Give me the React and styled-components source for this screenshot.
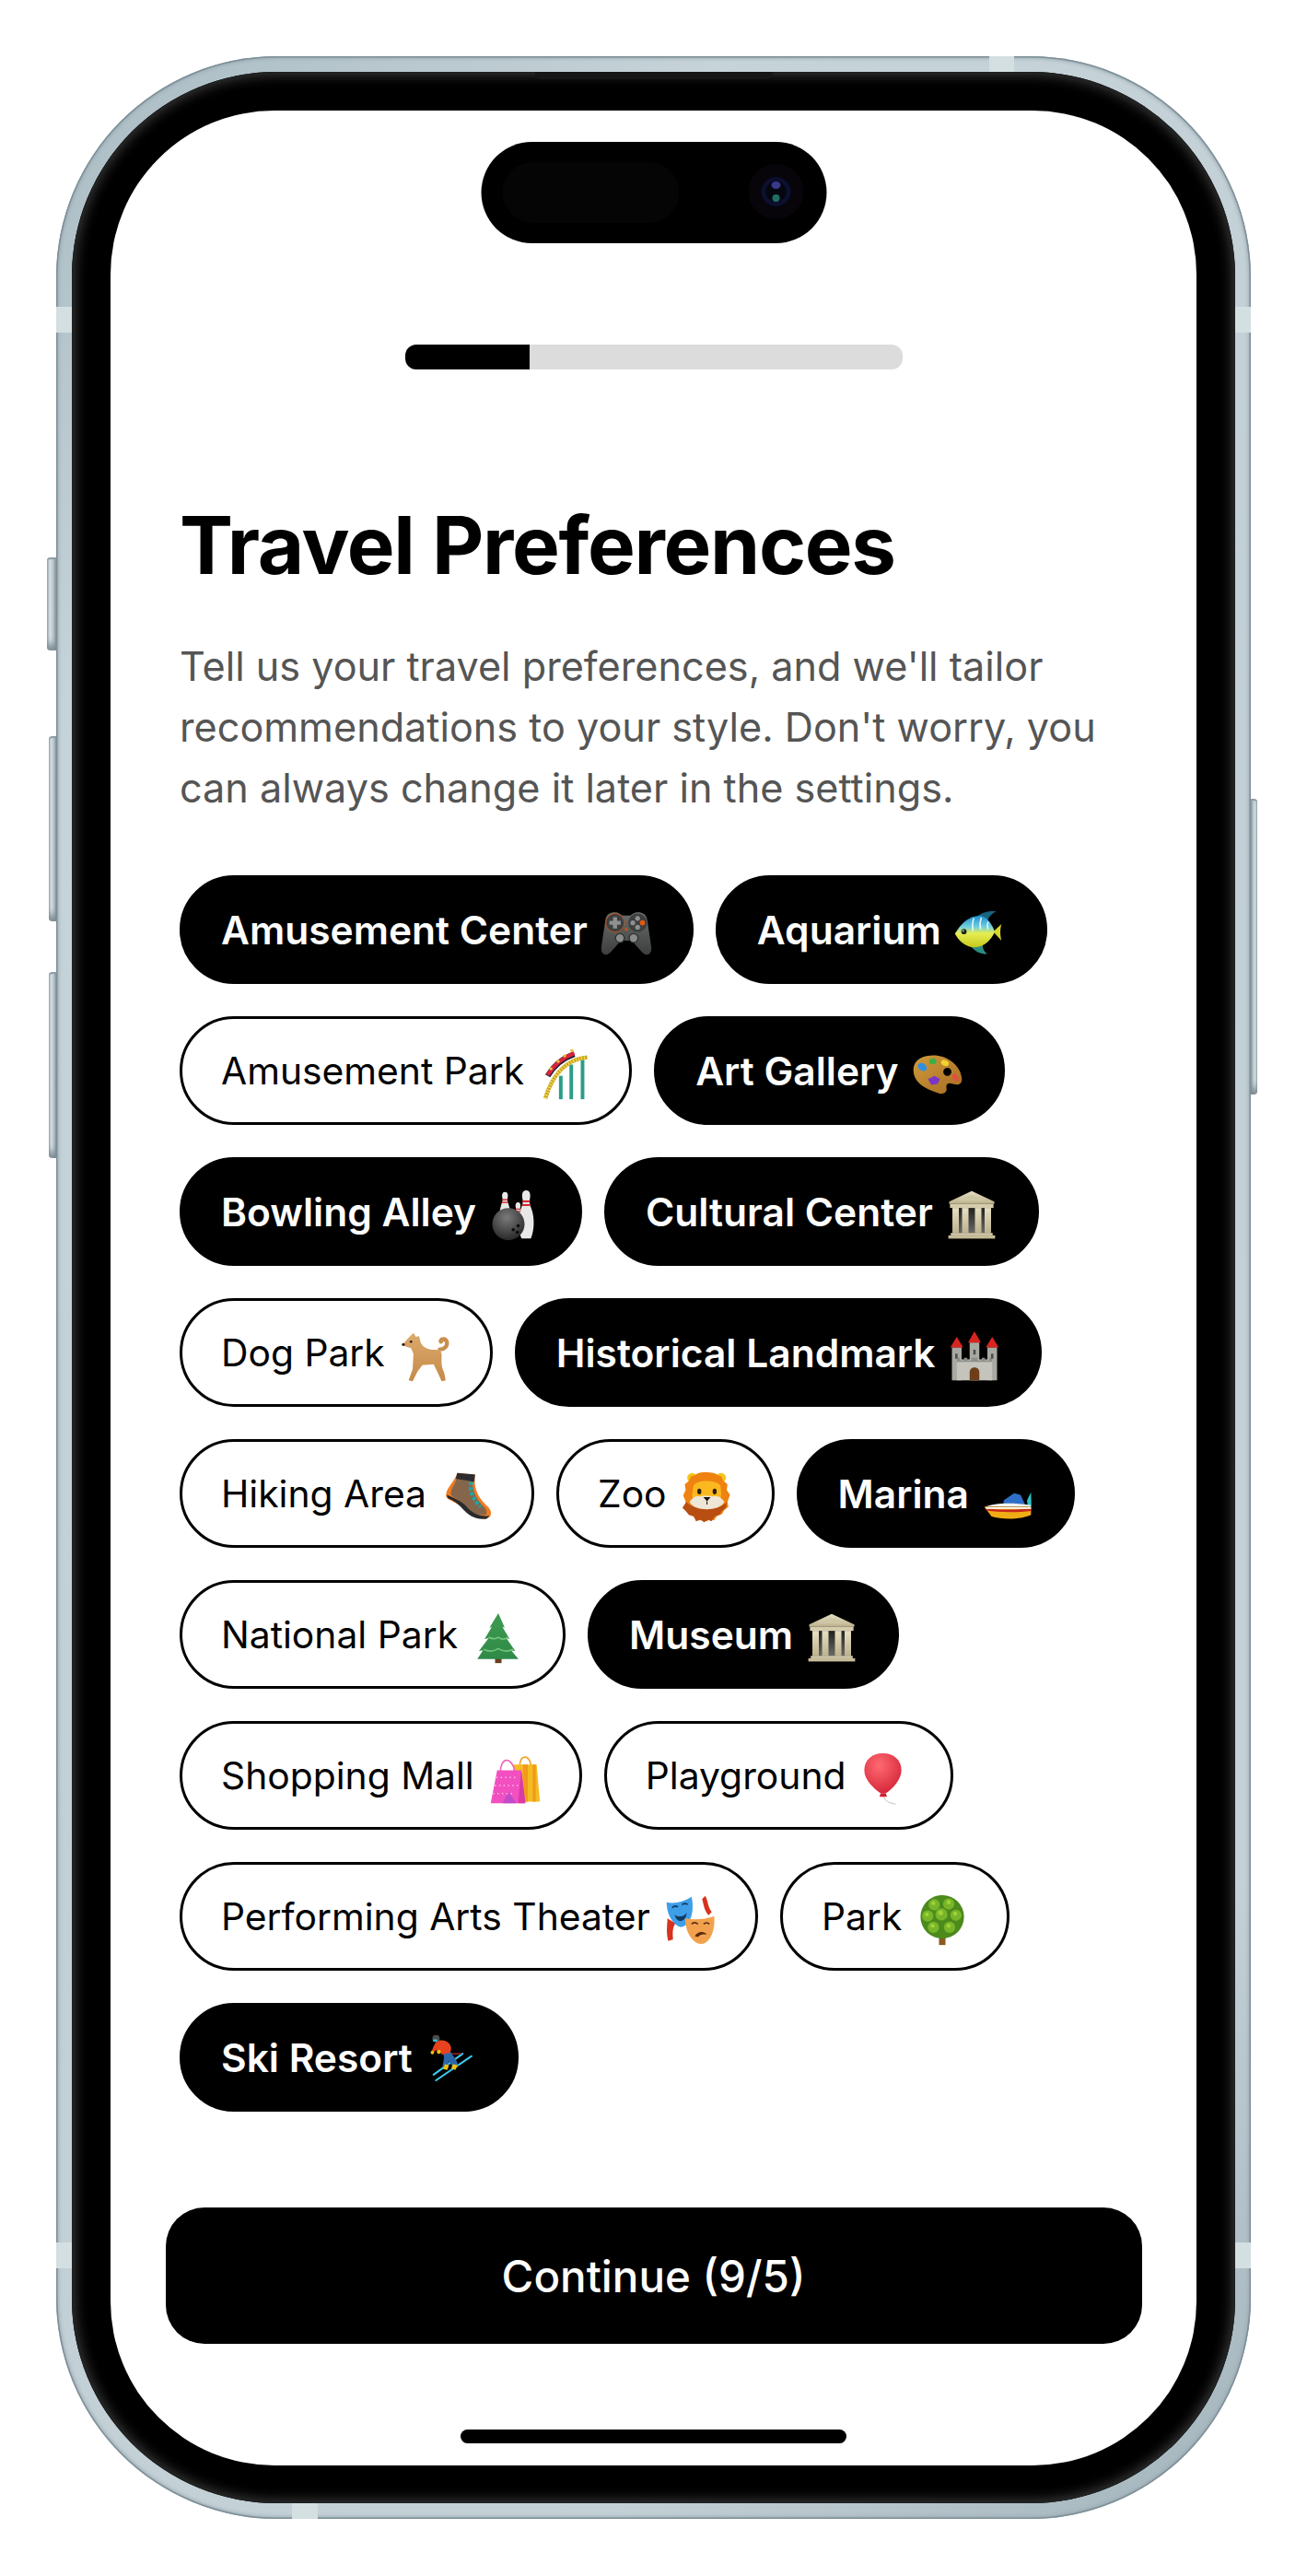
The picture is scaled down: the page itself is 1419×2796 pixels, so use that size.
import styled, { createGlobalStyle } from "styled-components";

const GlobalStyle = createGlobalStyle`
  html, body {
    margin: 0;
    padding: 0;
    background: #fff;
  }
  body {
    font-family: "Inter", "Liberation Sans", sans-serif;
  }
  * {
    box-sizing: border-box;
  }
`;

const Page = styled.div`
  width: 1419px;
  height: 2796px;
  padding: 61px 0 0 61px;
  overflow: hidden;
`;

const Phone = styled.div`
  position: relative;
  width: 1297px;
  height: 2673px;
  padding: 17px;
  border-radius: 240px;
  background: linear-gradient(135deg, #a9bbc3 0%, #c6d3d8 18%, #c2cfd5 50%, #c4d1d6 82%, #a2b3bb 100%);
  box-shadow: inset 0 0 0 1.5px #7f9098, inset 0 0 4px 2px #93a4ac;
`;

const Band = styled.span`
  position: absolute;
  top: ${(p) => p.$top ?? "auto"};
  bottom: ${(p) => p.$bottom ?? "auto"};
  left: ${(p) => p.$left ?? "auto"};
  right: ${(p) => p.$right ?? "auto"};
  width: ${(p) => p.$width};
  height: ${(p) => p.$height};
  background: #d4dfe2;
`;

const SideKey = styled.span`
  position: absolute;
  top: ${(p) => p.$top}px;
  height: ${(p) => p.$height}px;
  width: ${(p) => p.$width}px;
  ${(p) => (p.$side === "left" ? `left: -${p.$width}px;` : `right: -${p.$width}px;`)}
  border-radius: ${(p) => (p.$side === "left" ? "4px 0 0 4px" : "0 4px 4px 0")};
  background: linear-gradient(
    ${(p) => (p.$side === "left" ? "90deg" : "270deg")},
    #98a7ae 0%,
    #dbe4e8 30%,
    #b7c5cb 70%,
    #84949c 100%
  );
  box-shadow: inset 0 2px 1px #8d9ca4, inset 0 -10px 8px -4px #7c8a91;
`;

const Bezel = styled.div`
  position: relative;
  width: 100%;
  height: 100%;
  padding: 42px 42px 41px;
  border-radius: 222px;
  background: #000;
  box-shadow: inset 0 0 0 1px #1c1f20, inset 0 0 14px 3px #3d3d3d;
`;

const Speaker = styled.span`
  position: absolute;
  top: 0;
  left: 50%;
  transform: translateX(-50%);
  width: 258px;
  height: 8px;
  border-radius: 0 0 6px 6px;
  background: #161616;
`;

const Screen = styled.main`
  position: relative;
  display: flex;
  flex-direction: column;
  width: 1179px;
  height: 2556px;
  padding-top: 254px;
  border-radius: 178px;
  background: #fff;
  overflow: hidden;
`;

const Island = styled.div`
  position: absolute;
  top: 34px;
  left: 50%;
  transform: translateX(-50%);
  width: 375px;
  height: 110px;
  border-radius: 55px;
  background: #000;
`;

const Sensor = styled.span`
  position: absolute;
  left: 23px;
  top: 22px;
  width: 192px;
  height: 66px;
  border-radius: 33px;
  background: #050505;
`;

const Lens = styled.svg`
  position: absolute;
  left: 290px;
  top: 24px;
  width: 60px;
  height: 60px;
`;

const Progress = styled.div`
  align-self: center;
  width: 540px;
  height: 27px;
  border-radius: 12px;
  background: #dcdcdc;
  overflow: hidden;
`;

const ProgressFill = styled.div`
  width: ${(p) => p.$value}%;
  height: 100%;
  background: #000;
`;

const Content = styled.section`
  display: flex;
  flex-direction: column;
  padding: 0 75px;
`;

const Title = styled.h1`
  margin: 137px 0 0;
  font-size: 87px;
  line-height: 108px;
  font-weight: 700;
  letter-spacing: -1.3px;
  color: #000;
`;

const Description = styled.p`
  margin: 44px 0 0;
  font-size: 43.2px;
  line-height: 66px;
  font-weight: 400;
  color: #555;
`;

const Chips = styled.div`
  display: flex;
  flex-wrap: wrap;
  gap: 35px 24px;
  margin-top: 62px;
`;

const Chip = styled.button`
  display: inline-flex;
  align-items: center;
  height: 118px;
  padding: 0 42px;
  border: 3px solid #000;
  border-radius: 59px;
  background: ${(p) => (p.$selected ? "#000" : "#fff")};
  color: ${(p) => (p.$selected ? "#fff" : "#000")};
  font-family: inherit;
  font-size: ${(p) => (p.$selected ? "42.5px" : "40.8px")};
  font-weight: ${(p) => (p.$selected ? 600 : 400)};
  white-space: pre;

  svg {
    margin-left: ${(p) => (p.$selected ? "14px" : "16px")};
  }
`;

const EmojiIcon = styled.svg`
  flex: none;
  width: 56px;
  height: 56px;
  transform: translateY(4px);
`;

const Footer = styled.footer`
  display: flex;
  flex-direction: column;
  align-items: center;
  margin-top: auto;
  padding-bottom: 24px;
`;

const ContinueButton = styled.button`
  width: 1060px;
  height: 148px;
  border: 0;
  border-radius: 42px;
  background: #000;
  color: #fff;
  font-family: inherit;
  font-size: 47.5px;
  font-weight: 500;
`;

const HomeIndicator = styled.div`
  width: 419px;
  height: 15px;
  margin-top: 93px;
  border-radius: 8px;
  background: #000;
`;

const Emoji = ({ children }) => <EmojiIcon viewBox="0 0 64 64">{children}</EmojiIcon>;

const Gamepad = () => (
  <Emoji>
    <defs>
      <linearGradient id="padBody" x1="0" y1="0" x2="0" y2="1">
        <stop offset="0" stopColor="#6b6e6c" />
        <stop offset="1" stopColor="#3c3f3d" />
      </linearGradient>
    </defs>
    <path d="M18 6C11 6 7 9 6 16L1 49c-1 8 4 11 8 9 4-2 13-14 16-17h14c3 3 12 15 16 17 4 2 9-1 8-9l-5-33c-1-7-5-10-12-10-5 0-7 3-9 4H27c-2-1-4-4-9-4Z" fill="url(#padBody)" />
    <circle cx="18" cy="19" r="11.5" fill="#3d3f3e" stroke="#c2541f" strokeWidth="1" />
    <path d="M15.5 12h5v4.500h4.500v5h-4.500v4.500h-5v-4.500H11v-5h4.500Z" fill="#8e918f" />
    <circle cx="46" cy="19" r="11.5" fill="#3d3f3e" />
    <circle cx="46" cy="13.500" r="3" fill="#8e918f" />
    <circle cx="52" cy="19" r="3.200" fill="#e2590f" />
    <circle cx="40" cy="19" r="3" fill="#8e918f" />
    <circle cx="46" cy="24.500" r="3" fill="#8e918f" />
    <circle cx="32" cy="27" r="2" fill="#c2541f" />
    <circle cx="24" cy="38" r="5.500" fill="#8a8d8b" stroke="#2e302f" strokeWidth="1.500" />
    <circle cx="41" cy="38" r="5.500" fill="#8a8d8b" stroke="#2e302f" strokeWidth="1.500" />
  </Emoji>
);

const Fish = () => (
  <Emoji>
    <defs>
      <linearGradient id="fishBody" x1="0" y1="0" x2="0" y2="1">
        <stop offset="0" stopColor="#1f8fd0" />
        <stop offset="0.35" stopColor="#6fd0e0" />
        <stop offset="0.55" stopColor="#e6ee52" />
        <stop offset="1" stopColor="#c7c81c" />
      </linearGradient>
    </defs>
    <g transform="translate(0 2) scale(0.93)">
      <path d="M28 12C36 4 46 2 56 3 50 6 46 10 44 16Z" fill="#17657f" />
      <path d="M22 50c6 6 12 10 22 10-4-3-6-7-6-12Z" fill="#2c8d80" />
      <path d="M52 30 63 20c-2 8-2 14 0 22Z" fill="#d7d62a" />
      <path d="M1 33C8 20 20 9 33 9c10 0 17 10 21 21-4 11-15 21-27 21C15 51 6 42 1 33Z" fill="url(#fishBody)" />
      <path d="M26 12c-2 7-2 12-1 17M36 11c-2 6-2 11-1 16M45 17c-1 4-1 7 0 10" stroke="#fff" strokeWidth="2" fill="none" opacity="0.85" />
      <circle cx="13" cy="30" r="3.500" fill="#20261a" />
      <circle cx="12" cy="29" r="1" fill="#fff" />
    </g>
  </Emoji>
);

const Coaster = () => (
  <Emoji>
    <g fill="#2a9d8a">
      <rect x="25" y="34" width="4.500" height="29" />
      <rect x="38" y="20" width="4.500" height="43" />
      <rect x="52" y="14" width="4.500" height="49" />
    </g>
    <path d="M8 62C14 42 28 14 60 11" fill="none" stroke="#c9a21b" strokeWidth="5" />
    <path d="M8 62C14 42 28 14 60 11" fill="none" stroke="#f5dd5c" strokeWidth="4" strokeDasharray="1.500 2" />
    <path d="M11 34C18 22 30 12 44 7" fill="none" stroke="#1c1c34" strokeWidth="7" />
    <path d="M11 33C18 21 30 11 44 6" fill="none" stroke="#d8243a" strokeWidth="5" />
    <g fill="#e8c040">
      <circle cx="15" cy="25" r="2" />
      <circle cx="24" cy="16" r="2" />
      <circle cx="32" cy="9" r="2" />
      <circle cx="41" cy="2.500" r="2" />
    </g>
  </Emoji>
);

const Palette = () => (
  <Emoji>
    <defs>
      <linearGradient id="woodBody" x1="0" y1="0" x2="1" y2="1">
        <stop offset="0" stopColor="#d09a3c" />
        <stop offset="1" stopColor="#a66d22" />
      </linearGradient>
    </defs>
    <path fillRule="evenodd" d="M2 25C3 11 20 7 33 9c14 2 28 14 29 28 .5 8-5 9-11 7-6-2-9 0-8 5 1 6-5 9-11 6C15 50 1 41 2 25Zm42-1a5 5 0 1 0 .1 0Z" fill="url(#woodBody)" />
    <ellipse cx="13" cy="23" rx="6" ry="4.500" fill="#2f8fe0" transform="rotate(35 13 23)" />
    <ellipse cx="26" cy="16" rx="4.500" ry="3.800" fill="#3cb043" />
    <ellipse cx="41" cy="18" rx="5" ry="3.500" fill="#f2d32c" transform="rotate(25 41 18)" />
    <ellipse cx="54" cy="36" rx="3.500" ry="5" fill="#e0503e" transform="rotate(-25 54 36)" />
    <path d="M20 38l8-4 7 4-3 6-8 1Z" fill="#7a35c8" />
  </Emoji>
);

const BowlingPin = ({ x, y, s }) => (
  <g transform={`translate(${x} ${y}) scale(${s})`}>
    <path d="M7 0c4 0 5 4 4 9-1 4 0 6 2 12 3 9 3 22-1 31H2c-4-9-4-22-1-31C3 15 4 13 3 9 2 4 3 0 7 0Z" fill="#e8e8e6" />
    <rect x="3" y="11" width="8" height="2" fill="#d8242c" />
    <rect x="2.500" y="15" width="9" height="2" fill="#d8242c" />
  </g>
);

const Bowling = () => (
  <Emoji>
    <BowlingPin x={14} y={3} s={0.82} />
    <BowlingPin x={38} y={1} s={1.15} />
    <BowlingPin x={31} y={16} s={0.7} />
    <defs>
      <radialGradient id="ballFill" cx="0.45" cy="0.3" r="0.8">
        <stop offset="0" stopColor="#7a7a7a" />
        <stop offset="1" stopColor="#1d1d1d" />
      </radialGradient>
    </defs>
    <circle cx="24" cy="43" r="20" fill="url(#ballFill)" />
    <g fill="#0b0b0b">
      <circle cx="30" cy="50" r="2" />
      <circle cx="36" cy="45" r="2" />
      <circle cx="35" cy="53" r="2" />
    </g>
  </Emoji>
);

const Temple = () => (
  <Emoji>
    <defs>
      <linearGradient id="stone" x1="0" y1="0" x2="0" y2="1">
        <stop offset="0" stopColor="#e6dfc4" />
        <stop offset="1" stopColor="#bdb28e" />
      </linearGradient>
      <linearGradient id="templeInner" x1="0" y1="0" x2="0" y2="1">
        <stop offset="0" stopColor="#1b1a18" />
        <stop offset="1" stopColor="#6b6a66" />
      </linearGradient>
    </defs>
    <rect x="9" y="20" width="46" height="34" fill="url(#templeInner)" />
    <path d="M32 2 60 15v3H4v-3Z" fill="url(#stone)" />
    <path d="M32 7 50 14H14Z" fill="#cfc6a5" />
    <rect x="5" y="18" width="54" height="5" fill="#d5ccad" />
    <g fill="url(#stone)">
      <rect x="8" y="23" width="8" height="31" />
      <rect x="20" y="23" width="8" height="31" />
      <rect x="36" y="23" width="8" height="31" />
      <rect x="48" y="23" width="8" height="31" />
    </g>
    <rect x="6" y="54" width="52" height="3" fill="#d8cfb0" />
    <rect x="3" y="57" width="58" height="4" fill="#c6bc99" />
  </Emoji>
);

const Dog = () => (
  <Emoji>
    <defs>
      <linearGradient id="dogFur" x1="0" y1="0" x2="0" y2="1">
        <stop offset="0" stopColor="#dcaa6d" />
        <stop offset="1" stopColor="#c58a4a" />
      </linearGradient>
    </defs>
    <path d="M50 26c7 0 12-5 11-12-1-6-9-8-12-3-2 3 1 7 4 5 1-1 0-3 2-2 3 2 0 7-5 7-2 0-3 1-3 3Z" fill="#c98f4e" />
    <path d="M17 3l3 5 4-1 2 8c2 5 8 9 17 9 5 0 9 1 9 6 0 8-1 14 3 22l2 10-5 1-6-13-4-8-14 1-6 8-6 12-5-1 5-14 1-19-3-7-7-2-3-3 5-6Z" fill="url(#dogFur)" />
    <circle cx="14" cy="14" r="1.500" fill="#2c1c10" />
    <circle cx="4.500" cy="17.500" r="1.800" fill="#2c1c10" />
  </Emoji>
);

const Castle = () => (
  <Emoji>
    <g fill="#a9a9a3">
      <rect x="4" y="21" width="12" height="41" />
      <rect x="26" y="15" width="12" height="47" />
      <rect x="48" y="21" width="12" height="41" />
      <path d="M10 36h44v26H10Z" fill="#c4c4bc" />
      <path d="M10 34h4v3h5v-3h4v3h5v-3h8v3h5v-3h4v3h5v-3h4v5H10Z" fill="#8f8f89" />
    </g>
    <g fill="#d7261f">
      <path d="M2 21 10 8l8 13Z" />
      <path d="M24 15 32 1l8 14Z" />
      <path d="M46 21 54 8l8 13Z" />
    </g>
    <path d="M26 62V52c0-8 12-8 12 0v10Z" fill="#6e3e1b" />
    <g fill="#4d4d49">
      <rect x="8" y="29" width="3" height="6" />
      <rect x="30.500" y="24" width="3" height="6" />
      <rect x="52.500" y="29" width="3" height="6" />
    </g>
  </Emoji>
);

const Boot = () => (
  <Emoji>
    <path d="M20 2 42 4c-2 14 2 28 16 40 5 4 5 12 0 14-12 2-22-2-30-12C18 37 6 36 6 30c0-10 10-16 14-28Z" fill="#f07c21" />
    <path d="M20 5 39 7c-1 13 2 26 15 38 3 3 3 8 1 9-10 1-20-3-26-12-7-8-17-10-17-14 0-9 6-11 8-23Z" fill="#85664b" />
    <path d="M20 2 42 4l-1 9-23-4Z" fill="#2d2d2f" />
    <path d="M37 13c-2 12 3 22 12 31" fill="none" stroke="#1ca6a8" strokeWidth="5" strokeDasharray="4 2.500" />
    <path d="M8 33c8 3 14 8 20 15 8 9 18 12 28 11l4-4c-12 2-22-3-29-12C24 36 16 33 7 29Z" fill="#2b2b2b" />
  </Emoji>
);

const Lion = () => (
  <Emoji>
    <circle cx="13" cy="8" r="6" fill="#f5c518" />
    <circle cx="49" cy="8" r="6" fill="#f5c518" />
    <path d="M31 1c6 0 11 1 15 4l3 1 3 6 5 4-1 7 4 6-3 9 1 6-5 4-3 5-6 2-4 6-4-2-5 3-5-3-5 2-3-6-6-2-4-5-4-4 1-7-3-7 3-7-1-7 5-4 3-6 4-1c3-3 9-4 15-4Z" fill="#ef8211" />
    <path d="M6 38c5 6 14 8 25 8s20-2 25-8l-1 7-5 4-3 5-6 2-4 6-4-2-5 3-5-3-5 2-3-6-6-2-4-5-4-4Z" fill="#b84e12" />
    <path d="M15 17c4-4 10-5 16-5s13 1 17 5c1 6 2 13 0 17H14c-2-4 0-11 1-17Z" fill="#fbb81f" />
    <path d="M10 38c3-6 9-8 13-7 3-1 12-1 16 0 5-1 11 1 14 7-3 6-12 9-22 9s-18-3-21-9Z" fill="#eee6d6" />
    <ellipse cx="22" cy="25" rx="2.500" ry="3.500" fill="#2a1a10" />
    <ellipse cx="41" cy="25" rx="2.500" ry="3.500" fill="#2a1a10" />
    <path d="M27 32h9l-4.500 5Z" fill="#1b1210" />
    <path d="M31.500 37v4" stroke="#1b1210" strokeWidth="1.200" />
  </Emoji>
);

const Boat = () => (
  <Emoji>
    <path d="M57 44 56 36l5-10 .5 18Z" fill="#2cc3c6" />
    <path d="M27 36 40 27l8 2 6 13H27Z" fill="#2f6fc8" />
    <path d="M3 44c14-4 28-6 58-2l-1 2Z" fill="#f3f3f0" />
    <path d="M3 44h58v10c-12 6-36 6-49 2Z" fill="#f0ac14" />
    <path d="M4 46c16 2 40 2 57 0v3c-16 2-40 2-55-.5Z" fill="#c8281e" />
    <path d="M5 44.500h56v2H5Z" fill="#fff" />
  </Emoji>
);

const Pine = () => (
  <Emoji>
    <defs>
      <linearGradient id="needles" x1="0" y1="0" x2="0" y2="1">
        <stop offset="0" stopColor="#3f9a50" />
        <stop offset="1" stopColor="#2f8a48" />
      </linearGradient>
    </defs>
    <rect x="28" y="54" width="8" height="9" fill="#6b3d1c" />
    <path d="M32 1 40 19l-3-1 9 15-4-1 11 16-5-1 9 11H6l7-11-5 1 12-16-5 1 9-15-3 1Z" fill="url(#needles)" />
    <path d="M20 31c4 2 8 3 12 0 4 3 8 3 12 0M14 46c6 3 12 3 18-1 6 4 12 4 18 1" stroke="#72c47a" strokeWidth="2" fill="none" />
  </Emoji>
);

const Bags = () => (
  <Emoji>
    <path d="M38 17c0-16 12-16 14-2" fill="none" stroke="#f0a22c" strokeWidth="2" />
    <path d="M30 14h29l4 46H30Z" fill="#f3bc21" />
    <path d="M42 14h6v46h-6ZM54 14h4v46h-4Z" fill="#f29a1b" />
    <path d="M14 24C14 4 28 4 32 22" fill="none" stroke="#f06ac0" strokeWidth="2" />
    <path d="M10 21h30l5 41H2Z" fill="#f24fc0" />
    <path d="M24 48 34 62H17Z" fill="#c04bc8" />
    <path d="M40 21 45 62H36Z" fill="#d93ba6" />
    <path d="M9 30h26M7 40h29M5 50h26" stroke="#ffc4ea" strokeWidth="1.500" strokeDasharray="1.500 4" />
  </Emoji>
);

const Balloon = () => (
  <Emoji>
    <defs>
      <radialGradient id="balloonFill" cx="0.4" cy="0.3" r="0.8">
        <stop offset="0" stopColor="#ff6a72" />
        <stop offset="1" stopColor="#d11f33" />
      </radialGradient>
    </defs>
    <path d="M28 0c13 0 23 8 23 21 0 12-12 24-20 29h-5C17 44 5 33 5 21 5 8 15 0 28 0Z" fill="url(#balloonFill)" />
    <path d="M25 50h7l1 4h-9Z" fill="#d11f33" />
    <path d="M29 54c2 6 8 8 15 9" fill="none" stroke="#b9b9b9" strokeWidth="1" />
  </Emoji>
);

const Masks = () => (
  <Emoji>
    <path d="M50 2c4 8 3 14 8 20l-4 4c-6-7-6-14-8-20Z" fill="#d6321f" />
    <path d="M3 30c0 8-2 16 1 28l6-2c-1-10 0-16 3-20Z" fill="#d6321f" />
    <path d="M2 10c10 2 20 0 31-7 3 14 1 28-7 35-5 4-8 3-12 0C6 32 2 21 2 10Z" fill="#3e9fe8" />
    <path d="M9 17c2-3 5-3 7-1M21 13c2-2 6-2 7 0" stroke="#123a63" strokeWidth="2" fill="none" />
    <path d="M12 25c4 4 11 3 15-2-1 7-4 10-8 10-3 0-6-3-7-8Z" fill="#123a63" />
    <path d="M25 30c10 2 22 2 36-3 1 11-1 24-8 31-5 5-11 5-17 0-7-6-11-17-11-28Z" fill="#f2a24e" />
    <path d="M33 37c2-2 5-2 8 0M48 37c2-2 5-2 7 0" stroke="#5a2a0e" strokeWidth="2" fill="none" />
    <path d="M37 52c3-6 11-7 15-2-4-1-9 0-11 3Z" fill="#5a2a0e" />
  </Emoji>
);

const BroadTree = () => (
  <Emoji>
    <rect x="28" y="50" width="8" height="13" fill="#8a5a1e" />
    <ellipse cx="32" cy="28" rx="27" ry="27" fill="#4c8a1c" />
    <g fill="#79b52a">
      <circle cx="22" cy="13" r="7" />
      <circle cx="40" cy="12" r="7" />
      <circle cx="14" cy="27" r="7" />
      <circle cx="31" cy="25" r="7.500" />
      <circle cx="49" cy="26" r="7" />
      <circle cx="21" cy="41" r="7" />
      <circle cx="41" cy="41" r="7" />
    </g>
    <g fill="#a0d236">
      <circle cx="21" cy="11" r="2.500" />
      <circle cx="40" cy="10" r="2.500" />
      <circle cx="30" cy="23" r="3" />
      <circle cx="48" cy="24" r="2.500" />
      <circle cx="13" cy="25" r="2.500" />
      <circle cx="40" cy="39" r="2.500" />
      <circle cx="20" cy="39" r="2.500" />
    </g>
  </Emoji>
);

const Skier = () => (
  <Emoji>
    <path d="M10 49 46 23" stroke="#3ccbf0" strokeWidth="2.400" strokeLinecap="round" />
    <path d="M13 56 57 26" stroke="#3ccbf0" strokeWidth="2.400" strokeLinecap="round" />
    <path d="M30 23h15" stroke="#b02a24" strokeWidth="1.500" />
    <path d="M21 20l9-1 8 12 3 7-7 2-5-8-2 8-6-1 2-11Z" fill="#2c68a8" />
    <path d="M13 8c5-3 12-2 16 2 4 5 3 9 1 12l-10 2-3-6-5 1-2 1-1-4Z" fill="#e8421e" />
    <circle cx="13" cy="4" r="4.500" fill="#4b4b4b" />
    <rect x="9" y="5" width="6" height="3" rx="1.500" fill="#38c0c8" />
    <path d="M7 20l5-8 3 2-5 8Z" fill="#e8421e" />
    <circle cx="8.500" cy="21.500" r="2.200" fill="#f3c20e" />
    <circle cx="16.500" cy="20.500" r="2.500" fill="#f3c20e" />
    <path d="M24 36l5 1-2 6-5-1Z" fill="#f3c20e" />
    <path d="M34 36l6 1-3 6-5-2Z" fill="#f3c20e" />
  </Emoji>
);

const places = [
  { label: "Amusement Center", icon: Gamepad, selected: true },
  { label: "Aquarium", icon: Fish, selected: true },
  { label: "Amusement Park", icon: Coaster },
  { label: "Art Gallery", icon: Palette, selected: true },
  { label: "Bowling Alley", icon: Bowling, selected: true },
  { label: "Cultural Center", icon: Temple, selected: true },
  { label: "Dog Park", icon: Dog },
  { label: "Historical Landmark", icon: Castle, selected: true },
  { label: "Hiking Area", icon: Boot },
  { label: "Zoo", icon: Lion },
  { label: "Marina", icon: Boat, selected: true },
  { label: "National Park", icon: Pine },
  { label: "Museum", icon: Temple, selected: true },
  { label: "Shopping Mall", icon: Bags },
  { label: "Playground", icon: Balloon },
  { label: "Performing Arts Theater", icon: Masks },
  { label: "Park", icon: BroadTree },
  { label: "Ski Resort", icon: Skier, selected: true },
];

const App = () => {
  return (
    <Page>
      <GlobalStyle />
      <Phone>
        <SideKey $side="left" $top={544} $height={101} $width={10} />
        <SideKey $side="left" $top={738} $height={201} $width={8} />
        <SideKey $side="left" $top={994} $height={202} $width={8} />
        <SideKey $side="right" $top={806} $height={321} $width={7} />
        <Band $top="0" $left="1013px" $width="27px" $height="17px" />
        <Band $top="272px" $left="0" $width="17px" $height="28px" />
        <Band $top="272px" $right="0" $width="17px" $height="28px" />
        <Band $top="2373px" $left="0" $width="17px" $height="28px" />
        <Band $top="2373px" $right="0" $width="17px" $height="28px" />
        <Band $bottom="0" $left="256px" $width="28px" $height="17px" />
        <Bezel>
          <Speaker />
          <Screen>
            <Island>
              <Sensor />
              <Lens viewBox="0 0 60 60">
                <circle cx="30" cy="30" r="30" fill="#07040a" />
                <circle cx="30" cy="30" r="16" fill="#0c0f2e" />
                <circle cx="30" cy="30" r="11" fill="#05060f" />
                <ellipse cx="30" cy="23" rx="5" ry="4" fill="#3a3a8c" />
                <ellipse cx="30" cy="37" rx="4" ry="4" fill="#1f6f66" />
              </Lens>
            </Island>
            <Progress>
              <ProgressFill $value={25} />
            </Progress>
            <Content>
              <Title>Travel Preferences</Title>
              <Description>
                Tell us your travel preferences, and we'll tailor recommendations to your style. Don't worry, you can
                always change it later in the settings.
              </Description>
              <Chips>
                {places.map(({ label, icon: Icon, selected }) => (
                  <Chip key={label} $selected={selected}>
                    {label}
                    <Icon />
                  </Chip>
                ))}
              </Chips>
            </Content>
            <Footer>
              <ContinueButton>Continue (9/5)</ContinueButton>
              <HomeIndicator />
            </Footer>
          </Screen>
        </Bezel>
      </Phone>
    </Page>
  );
};

export default App;
